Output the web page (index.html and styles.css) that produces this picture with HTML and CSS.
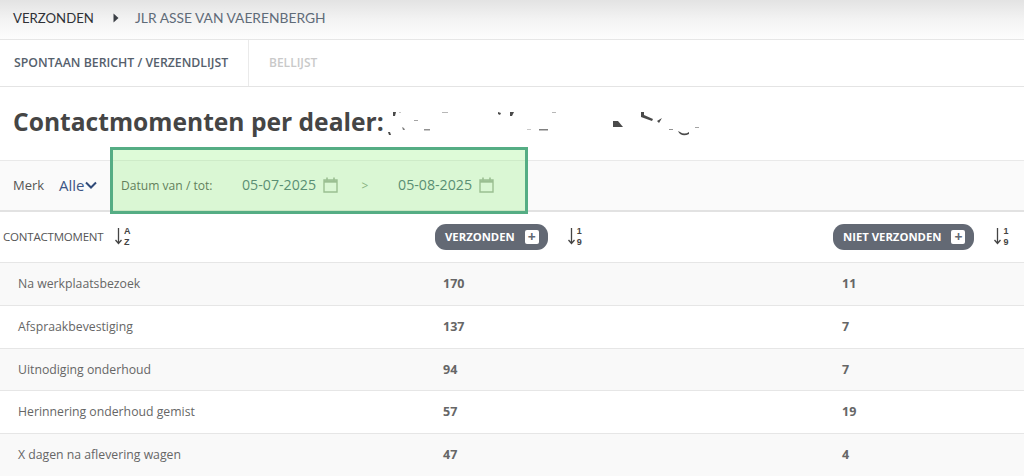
FILE: index.html
```html
<!DOCTYPE html>
<html lang="nl">
<head>
<meta charset="utf-8">
<title>Contactmomenten per dealer</title>
<link rel="stylesheet" href="styles.css">
</head>
<body>
<nav class="crumbs">
  <span class="crumb-root">VERZONDEN</span>
  <svg class="crumb-arrow" width="6" height="10" viewBox="0 0 6 10"><path d="M0.5 0.5 5.5 5 0.5 9.5Z" fill="#3b3f45"/></svg>
  <span class="crumb-leaf">JLR ASSE VAN VAERENBERGH</span>
</nav>
<div class="tabs">
  <div class="tab tab-active">SPONTAAN BERICHT / VERZENDLIJST</div>
  <div class="tab tab-muted">BELLIJST</div>
</div>
<header class="title-row">
  <h1>Contactmomenten per dealer:</h1>
  <svg class="smudge" width="330" height="40" viewBox="0 0 330 40" aria-hidden="true">
    <g fill="#4a4a4a">
      <path d="M19 8l3 0-1 4-2 0Z"/><path d="M25 8h2v1h-2Z" opacity=".3"/><path d="M14 28l2 0 1 3-2 0Z"/>
      <path d="M28 23l2 1 1 2-2 0Z" opacity=".7"/><path d="M40 16h4v1h-4Z" opacity=".5"/><path d="M50 25h6v1.500h-6Z" opacity=".6"/>
      <path d="M68 8h6v1h-6Z" opacity=".4"/><path d="M124 8l3 1-1 2-2-1Z"/><path d="M136 8l4 0-2 4-2 0Z"/>
      <path d="M178 8h4v1h-4Z" opacity=".4"/><path d="M153 25h4v1h-4Z" opacity=".3"/><path d="M165 25h9v1.500h-9Z" opacity=".7"/>
      <path d="M239 17l5 0 5 6h-10Z"/><path d="M267 8l3 0 0 3 9 4-1 2-11-4Z"/><path d="M283 17l5-3-3 5Z"/>
      <path d="M295 25h4v1h-4Z" opacity=".6"/><path d="M304 27l2 1c3 2 6 2 9 0l0 2c-4 2-9 2-11-3Z"/><path d="M321 23h4v1h-4Z" opacity=".5"/>
    </g>
  </svg>
</header>
<section class="filters">
  <span class="merk-label">Merk</span>
  <span class="merk-value">Alle</span>
  <svg class="merk-chevron" width="12" height="8" viewBox="0 0 12 8"><path d="M1 1.500 6 6.500 11 1.500" fill="none" stroke="#2f4a78" stroke-width="2"/></svg>
  <span class="date-label">Datum van / tot:</span>
  <span class="date">05-07-2025</span>
  <svg class="cal" width="15" height="16" viewBox="0 0 15 16"><path d="M1 3h13v12H1Z" fill="#fafafa" fill-opacity=".2" stroke="#a3ad9f" stroke-width="1.400"/><path d="M1 4.500h13" stroke="#a3ad9f" stroke-width="2.400"/><path d="M4 0.500v3M11 0.500v3" stroke="#a3ad9f" stroke-width="1.600"/></svg>
  <span class="date-sep">&gt;</span>
  <span class="date">05-08-2025</span>
  <svg class="cal" width="15" height="16" viewBox="0 0 15 16"><path d="M1 3h13v12H1Z" fill="#fafafa" fill-opacity=".2" stroke="#a3ad9f" stroke-width="1.400"/><path d="M1 4.500h13" stroke="#a3ad9f" stroke-width="2.400"/><path d="M4 0.500v3M11 0.500v3" stroke="#a3ad9f" stroke-width="1.600"/></svg>
  <div class="highlight"></div>
</section>
<table class="stats">
  <thead>
    <tr>
      <th class="col-name">
        <div class="head-cell">
          <span class="head-text">CONTACTMOMENT</span>
          <span class="sort"><svg width="7" height="17" viewBox="0 0 7 17"><path d="M3.500 0v15M0.500 12l3 3.500 3-3.500" fill="none" stroke="#444" stroke-width="1.300"/></svg><span class="sort-keys"><b>A</b><b>Z</b></span></span>
        </div>
      </th>
      <th class="col-sent">
        <div class="head-cell">
          <span class="pill">VERZONDEN<span class="plus">+</span></span>
          <span class="sort sort-gap"><svg width="7" height="17" viewBox="0 0 7 17"><path d="M3.500 0v15M0.500 12l3 3.500 3-3.500" fill="none" stroke="#444" stroke-width="1.300"/></svg><span class="sort-keys"><b>1</b><b>9</b></span></span>
        </div>
      </th>
      <th class="col-unsent">
        <div class="head-cell">
          <span class="pill">NIET VERZONDEN<span class="plus">+</span></span>
          <span class="sort sort-gap"><svg width="7" height="17" viewBox="0 0 7 17"><path d="M3.500 0v15M0.500 12l3 3.500 3-3.500" fill="none" stroke="#444" stroke-width="1.300"/></svg><span class="sort-keys"><b>1</b><b>9</b></span></span>
        </div>
      </th>
    </tr>
  </thead>
  <tbody>
    <tr class="odd"><td class="name">Na werkplaatsbezoek</td><td class="num num-sent">170</td><td class="num num-unsent">11</td></tr>
    <tr><td class="name">Afspraakbevestiging</td><td class="num num-sent">137</td><td class="num num-unsent">7</td></tr>
    <tr class="odd short"><td class="name">Uitnodiging onderhoud</td><td class="num num-sent">94</td><td class="num num-unsent">7</td></tr>
    <tr><td class="name">Herinnering onderhoud gemist</td><td class="num num-sent">57</td><td class="num num-unsent">19</td></tr>
    <tr class="odd"><td class="name">X dagen na aflevering wagen</td><td class="num num-sent">47</td><td class="num num-unsent">4</td></tr>
  </tbody>
</table>
</body>
</html>
```

FILE: styles.css
```css
* { box-sizing: border-box; }
html, body { margin: 0; padding: 0; height: 476px; overflow: hidden; background: #fff; }
body { font-family: "Open Sans", "Liberation Sans", sans-serif; color: #555; position: relative; }

.crumbs {
  height: 40px;
  display: flex;
  align-items: center;
  padding: 0 0 4px 13px;
  background: linear-gradient(#e3e3e3 0, #f3f3f3 50%, #fdfdfd 100%);
  border-bottom: 1px solid #e6e6e6;
  font-family: "Lato", sans-serif;
}
.crumb-root { color: #2e3136; width: 100px; font-size: 13.200px; }
.crumb-arrow { margin-right: 16px; }
.crumb-leaf { color: #5f6b78; font-size: 13.800px; }

.tabs {
  height: 47px;
  display: flex;
  border-bottom: 1px solid #e4e4e4;
  font-weight: 600;
}
.tab { display: flex; align-items: center; padding-bottom: 1px; }
.tab-active { width: 249px; padding-left: 14px; color: #55606c; border-right: 1px solid #eaeaea; font-size: 12.300px; }
.tab-muted { padding-left: 20px; color: #c9c9c9; font-size: 12px; }

.title-row { height: 73px; display: flex; align-items: flex-start; padding: 15px 0 0 13px; position: relative; }
h1 { margin: 0; font-size: 24.600px; line-height: 40px; font-weight: 700; color: #454545; white-space: nowrap; }
.smudge { position: absolute; left: 374px; top: 17px; }

.filters {
  height: 52px;
  display: flex;
  align-items: center;
  position: relative;
  background: #fafafa;
  border-top: 1px solid #e9e9e9;
  border-bottom: 2px solid #e2e2e2;
  padding: 0 0 2px 13px;
}
.merk-label { font-size: 13px; color: #555; width: 46px; }
.merk-value { font-size: 15px; color: #3d5585; width: 26px; }
.merk-chevron { margin-right: 24px; }
.date-label { font-size: 12.100px; width: 121px; color: #555; margin-top: 2px; }
.date { font-size: 14.200px; color: #4a6a75; }
.cal { margin-left: 7px; margin-top: 1px; }
.date-sep { font-size: 12px; width: 60px; text-align: center; color: #8a9a88; padding-right: 6px; margin-top: 2px; }
.highlight {
  position: absolute;
  left: 110px;
  top: -14px;
  width: 418px;
  height: 67px;
  background: rgba(134, 239, 111, 0.27);
  border: 3px solid #55ad84;
}

.stats { width: 1024px; border-collapse: collapse; table-layout: fixed; }
.col-name { width: 435px; padding: 0 0 0 3px; }
.col-sent { width: 398px; padding: 0; }
.col-unsent { padding: 0; }
thead th { height: 50px; border-bottom: 1px solid #e6e6e6; font-weight: 400; text-align: left; }
.head-cell { display: flex; align-items: center; }
.head-text { font-size: 11.500px; color: #555; letter-spacing: -0.2px; width: 112px; }
.sort { display: inline-flex; align-items: center; gap: 2px; color: #444; }
.sort-gap { margin-left: 20px; }
.sort-keys { display: flex; flex-direction: column; font-family: "Liberation Sans", sans-serif; font-size: 9px; line-height: 10.400px; }
.sort-keys b { font-weight: 700; display: block; }
.pill {
  height: 26px;
  display: inline-flex;
  align-items: center;
  justify-content: space-between;
  padding: 0 9px 0 10px;
  background: #636974;
  border-radius: 11px;
  color: #fff;
  font-size: 11.300px;
  font-weight: 700;
  gap: 10px;
  white-space: nowrap;
}
.plus {
  width: 14px;
  height: 14px;
  background: #fff;
  color: #636974;
  border-radius: 2px;
  display: inline-flex;
  align-items: center;
  justify-content: center;
  font-size: 14px;
  line-height: 14px;
  font-weight: 700;
}
tbody tr { height: 43px; }
tbody tr.short { height: 42px; }
tbody td { border-bottom: 1px solid #e6e6e6; padding: 0; }
tr.odd { background: #f9f9f9; }
.name { font-size: 12.250px; color: #666; padding-left: 18px !important; }
.num { font-size: 12.500px; font-weight: 700; color: #666; }
.num-sent { padding-left: 8px !important; }
.num-unsent { padding-left: 9px !important; }
```
